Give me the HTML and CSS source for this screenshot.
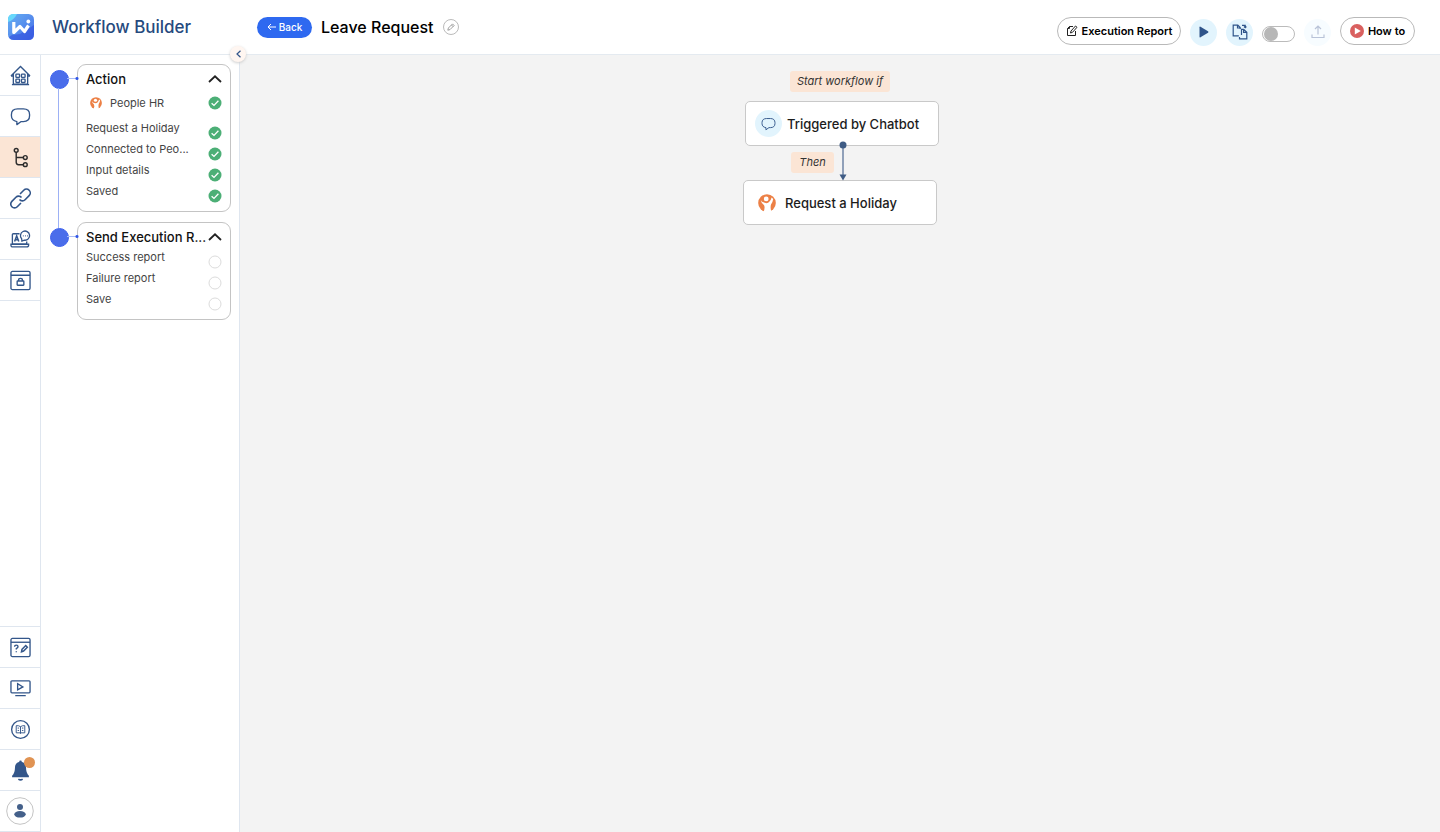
FILE: index.html
```html
<!DOCTYPE html>
<html lang="en">
<head>
<meta charset="utf-8">
<title>Workflow Builder</title>
<link rel="stylesheet" href="styles.css">
</head>
<body>
<svg class="defs" aria-hidden="true">
  <symbol id="check" viewBox="0 0 14 14"><circle cx="7" cy="7" r="6.500" fill="#4caf76"/><path d="M3.600 7.200 6 9.400l4.400-4.600" fill="none" stroke="#fff" stroke-width="1.300"/></symbol>
  <symbol id="ring" viewBox="0 0 14 14"><circle cx="7" cy="7" r="6" fill="#fff" stroke="#dcdcdc"/></symbol>
  <symbol id="up" viewBox="0 0 14 8"><path d="M1 7 7 1.300 13 7" fill="none" stroke="#222" stroke-width="1.800"/></symbol>
  <symbol id="bubble" viewBox="0 0 22 20"><path d="M7.200 15.300C3.600 14.700 1.500 13 1.500 9.300V8C1.500 4 4 2 8 2h6c4 0 6.500 2 6.500 6v1.300c0 4-2.500 6-6.500 6h-2.300L7.200 18.500z" fill="none" stroke="#33568a" stroke-width="1.400" stroke-linejoin="round"/></symbol>
  <symbol id="people" viewBox="0 0 18 18"><circle cx="9" cy="9" r="8.800" fill="#ec8046"/><circle cx="8.200" cy="4.900" r="2.400" fill="#fff"/><path d="M2.800 6.200Q4.500 9 8.500 9.200 12 9 13.600 3.600l1.600 1.300Q14.800 8 13 10.500q-.900 3 .3 7.500H5.500Q7.500 13 5.800 10.800 3.500 9.500 2.800 6.200z" fill="#fff"/></symbol>
</svg>
<div class="app">
  <header class="header">
    <div class="brand">
      <svg class="logo" viewBox="0 0 26 26"><defs><linearGradient id="lg" x1="0" y1="0" x2="1" y2="1"><stop offset="0" stop-color="#62aef4"/><stop offset=".4" stop-color="#5b96ee"/><stop offset="1" stop-color="#4268e8"/></linearGradient></defs><rect width="26" height="26" rx="5.500" fill="url(#lg)"/><path d="M0 8V5.500Q0 0 5.500 0H9Q6 6 0 8z" fill="#67d8fb"/><path d="m4 21 8-1 8-5 6-4v9.500q0 5.500-5.500 5.500h-14Q2 26 1 23z" fill="#3455df" opacity=".65"/><path d="M5.800 8v10.500l6.200-6 4.500 5 4-6" fill="none" stroke="#fff" stroke-width="3.200" stroke-linejoin="round"/><circle cx="20.300" cy="7.500" r="1.900" fill="#fff"/></svg>
      <h1 class="brand-name">Workflow Builder</h1>
    </div>
    <div class="title-bar">
      <button class="back"><svg width="9" height="8" viewBox="0 0 9 8" fill="none" stroke="#fff"><path d="M9 4H1M4 1 1 4l3 3"/></svg>Back</button>
      <h2 class="title">Leave Request</h2>
      <button class="edit" aria-label="Edit name"><svg width="8" height="8" viewBox="0 0 8 8" fill="none" stroke="#888" stroke-width=".8"><path d="m.8 7.200.6-2.200L5.500.9l1.600 1.600L3 6.600zM4.500 2l1.600 1.600"/></svg></button>
    </div>
    <div class="actions">
      <button class="pill"><svg width="12" height="12" viewBox="0 0 12 12" fill="none" stroke="#222"><path d="M7 1.500H3.500L1.500 3.500v7h8V6M3.500 1.500v2h-2M4.500 8l.5-2 4.500-5 1.500 1.300L6.500 7.300z"/></svg>Execution Report</button>
      <button class="round" aria-label="Run"><svg width="10" height="12" viewBox="0 0 10 12"><path d="M.5 1.200Q.5.200 1.500.7L9 5.300q1 .7 0 1.400l-7.500 4.600q-1 .5-1-.5z" fill="#2f548a"/></svg></button>
      <button class="round" aria-label="Duplicate"><svg width="16" height="16" viewBox="0 0 16 16" fill="none" stroke="#2f548a" stroke-width="1.200"><path d="M6.800 11.800H1.200V1.200h4.600L8.200 3.600V5M5.500 1.200V4h2.700M11.800 5.300H9.500V11M11.800 5.300l3 3v6.500H7.500V13M11.600 5.300v3h3.200M10 1.400h3.200v2M12 2.500l1.200 1.200 1.200-1.200"/></svg></button>
      <label class="switch"><input type="checkbox" aria-label="Enable workflow"></label>
      <button class="round faded" aria-label="Publish"><svg width="14" height="14" viewBox="0 0 14 14" fill="none" stroke="#b9c3d8" stroke-width="1.200"><path d="M7 9.500V1M4 4l3-3 3 3M1 9.500v3h12v-3"/></svg></button>
      <button class="pill howto"><svg width="14" height="14" viewBox="0 0 14 14"><circle cx="7" cy="7" r="7" fill="#d9605f"/><path d="M4.800 3.500v7l6-3.500z" fill="#fff"/></svg>How to</button>
    </div>
  </header>
  <div class="body">
    <nav class="rail">
      <a href="#" aria-label="Home"><svg viewBox="0 0 22 22"><path d="m1 11.500 10-10 10 10M3.500 9.500V20h15V9.500"/><path d="M1.200 11.500h2.300M18.500 11.500h2.300M2 20.500h18"/><rect x="6.200" y="9.500" width="3.800" height="3.500" rx=".7"/><rect x="12" y="9.500" width="3.800" height="3.500" rx=".7"/><rect x="6.200" y="14.800" width="3.800" height="3.500" rx=".7"/><rect x="12" y="14.800" width="3.800" height="3.500" rx=".7"/></svg></a>
      <a href="#" aria-label="Chat"><svg viewBox="0 0 22 20"><use href="#bubble"/></svg></a>
      <a href="#" aria-label="Workflows" class="active"><svg viewBox="0 0 22 22"><g stroke="#2c2c2c" stroke-width="1.500"><circle cx="6.500" cy="3.500" r="2"/><path d="M6.500 5.500V16q0 2.500 2.500 2.500h4.800M6.500 11h7.300"/><circle cx="16" cy="11" r="2"/><circle cx="16" cy="18.500" r="2"/></g></svg></a>
      <a href="#" aria-label="Connections"><svg viewBox="0 0 22 22"><g transform="rotate(-45 11 11)" stroke-width="1.700"><path d="M8 14.700H2.500a4 4 0 0 1 0-8h6a4 4 0 0 1 4 4.300"/><path d="M14 7.300h5.500a4 4 0 0 1 0 8h-6a4 4 0 0 1-4-4.300"/></g></svg></a>
      <a href="#" aria-label="Live chat"><svg viewBox="0 0 22 22"><path d="M10 5H3.500q-1 0-1 1v9.500h15V13M1 16h18.500v1q0 1.800-2 1.800H3q-2 0-2-1.800z"/><path d="M4.800 13 7 7.200 9.200 13M5.500 11.300h3" stroke-width="1.600"/><path d="m12.500 12.700-.3-2.500A4.800 4.800 0 1 1 15 11.700zM13.500 7.200h.8m1.400 0h.8m1.400 0h.8"/></svg></a>
      <a href="#" aria-label="Security"><svg viewBox="0 0 22 22"><rect x="1" y="1.500" width="20" height="19" rx="1.500"/><path d="M1 5.500h20M9 11.500v-1q0-1.800 2-1.800t2 1.800v1"/><rect x="7.500" y="11.500" width="7" height="4.500" rx=".5"/></svg></a>
      <div class="rail-gap"></div>
      <a href="#" aria-label="Quiz"><svg viewBox="0 0 22 22"><rect x="1" y="1.500" width="20" height="19" rx="1.500"/><path d="M1 5.500h20"/><path d="M4.800 10.300q0-1.800 1.800-1.800t1.800 1.700q0 1-1.800 2v1M6.600 15v1M12 15.500l.5-2.500 4-4 1.700 1.700-4 4z" stroke-width="1.500"/></svg></a>
      <a href="#" aria-label="Videos"><svg viewBox="0 0 22 22"><rect x="1" y="3" width="20" height="12.500" rx="1"/><path d="M8 6v6.500l5.500-3.200zM5.500 18.500h11"/></svg></a>
      <a href="#" aria-label="Guide"><svg viewBox="0 0 22 22"><circle cx="11" cy="11" r="9.300"/><path d="M11 8v7.500M11 8Q9 6.700 6.500 7v7.500H11h4.500V7Q13 6.700 11 8zM8 9.500h1.500M8 12h1.500M12.500 9.500H14M12.500 12H14" stroke-width="1"/></svg></a>
      <a href="#" aria-label="Notifications"><svg viewBox="0 0 22 22"><path d="M11 .5q1.400 0 1.400 1.500c3.200.8 4.400 3.200 4.400 6q0 5.500 3 8.500V18H2.200v-1.500q3-3 3-8.500c0-2.800 1.200-5.200 4.400-6Q9.600.5 11 .5z" fill="#33568a" stroke="none"/><path d="M8.800 20q2.200 1.600 4.400 0" stroke-width="1.800"/></svg><span class="badge"></span></a>
      <a href="#" aria-label="Account"><svg class="avatar" viewBox="0 0 28 28"><circle cx="14" cy="14" r="13.300" stroke="#c4c4c4"/><circle cx="14" cy="10" r="3" fill="#44608a" stroke="none"/><ellipse cx="14" cy="17.300" rx="5.700" ry="3.300" fill="#44608a" stroke="none"/></svg></a>
    </nav>
    <aside class="panel">
      <button class="collapse" aria-label="Collapse panel"><svg width="5" height="8" viewBox="0 0 5 8" fill="none" stroke="#33568a" stroke-width="1.200"><path d="M4.500.7 1 4l3.500 3.300"/></svg></button>
      <section class="step">
        <div class="marker"></div>
        <div class="card">
          <button class="card-head">Action<svg><use href="#up"/></svg></button>
          <div class="app-row"><svg class="people"><use href="#people"/></svg><span>People HR</span><svg class="mark"><use href="#check"/></svg></div>
          <ul class="rows">
            <li>Request a Holiday<svg class="mark"><use href="#check"/></svg></li>
            <li>Connected to Peo...<svg class="mark"><use href="#check"/></svg></li>
            <li>Input details<svg class="mark"><use href="#check"/></svg></li>
            <li>Saved<svg class="mark"><use href="#check"/></svg></li>
          </ul>
        </div>
      </section>
      <section class="step">
        <div class="marker"></div>
        <div class="card">
          <button class="card-head">Send Execution R...<svg><use href="#up"/></svg></button>
          <ul class="rows">
            <li>Success report<svg class="mark"><use href="#ring"/></svg></li>
            <li>Failure report<svg class="mark"><use href="#ring"/></svg></li>
            <li>Save<svg class="mark"><use href="#ring"/></svg></li>
          </ul>
        </div>
      </section>
    </aside>
    <main class="canvas">
      <div class="diagram">
        <span class="tag tag-start">Start workflow if</span>
        <div class="node node-trigger"><span class="node-icon"><svg width="15" height="14"><use href="#bubble"/></svg></span>Triggered by Chatbot</div>
        <span class="tag tag-then">Then</span>
        <div class="node node-action"><svg class="node-people"><use href="#people"/></svg>Request a Holiday</div>
        <svg class="arrow" viewBox="0 0 8 40"><path d="M4 4v32" stroke="#6f85a6" stroke-width="1.500"/><circle cx="4" cy="4" r="3.500" fill="#3f5c85"/><path d="M.5 33.500h7L4 39.500z" fill="#3f5c85"/></svg>
      </div>
    </main>
  </div>
</div>
</body>
</html>
```
FILE: styles.css
```css
* { box-sizing: border-box; }
body { margin: 0; font-family: Inter, sans-serif; color: #111; background: #fff; }
button { font: inherit; color: inherit; padding: 0; border: 0; background: none; cursor: pointer; }
h1, h2, ul { margin: 0; padding: 0; list-style: none; }
svg { display: block; flex: none; }
.defs { position: absolute; width: 0; height: 0; }
.app { display: flex; flex-direction: column; min-height: 100vh; }

.header { display: flex; align-items: center; height: 55px; border-bottom: 1px solid #e4eaf0; }
.brand { display: flex; align-items: center; gap: 18px; width: 257px; padding-left: 8px; }
.logo { width: 26px; height: 26px; }
.brand-name { font-size: 17px; line-height: 24px; font-weight: 500; color: #264a7e; }
.title-bar { display: flex; align-items: center; gap: 9px; flex: 1; }
.back { display: flex; align-items: center; justify-content: center; gap: 3px; width: 55px; height: 21px; border-radius: 11px; background: #2e69f0; color: #fff; font: 500 10px/14px Inter, sans-serif; }
.title { font-weight: 500; font-size: 16px; line-height: 24px; color: #000; }
.edit { display: grid; place-items: center; width: 16px; height: 16px; border: 1px solid #bbb; border-radius: 50%; }
.actions { display: flex; align-items: center; gap: 9px; padding: 10px 25px 0 0; }
.pill { display: flex; align-items: center; justify-content: center; gap: 4px; width: 124px; height: 28px; margin-bottom: 2px; border: 1px solid #b9b9b9; border-radius: 14px; font: 600 11px/16px Inter, sans-serif; color: #000; }
.howto { width: 75px; }
.round { display: grid; place-items: center; width: 27px; height: 27px; border-radius: 50%; background: #e2f4fd; }
.faded { background: #f7fcff; }
.switch { display: flex; margin-top: 3px; }
.switch input { appearance: none; display: flex; align-items: center; width: 33px; height: 16px; margin: 0; padding: 0 1px; border: 1px solid #bbb; border-radius: 8px; }
.switch input::before { content: ""; width: 14px; height: 14px; border-radius: 50%; background: #b7b7b7; }

.body { display: flex; flex: 1; }
.rail { display: flex; flex-direction: column; width: 41px; border-right: 1px solid #dfe6ef; }
.rail a { position: relative; display: grid; place-items: center; height: 41px; border-bottom: 1px solid #dfe6ef; }
.rail svg { width: 21px; height: 21px; fill: none; stroke: #33568a; stroke-width: 1.4; }
.rail .active { background: #fbe5d5; }
.rail .avatar { width: 28px; height: 28px; stroke-width: 1; }
.rail-gap { flex: 1; border-bottom: 1px solid #dfe6ef; }
.badge { position: absolute; top: 7px; right: 5px; width: 11px; height: 11px; border-radius: 50%; background: #e09353; }

.panel { position: relative; display: flex; flex-direction: column; gap: 10px; width: 199px; padding: 9px 8px 0 9px; border-right: 1px solid #dfe6ef; }
.collapse { position: absolute; top: -9px; right: -7px; display: grid; place-items: center; width: 16px; height: 16px; border-radius: 50%; background: #fff6f1; box-shadow: 0 1px 3px #ccc; }
.step { position: relative; display: grid; grid-template-columns: 27px minmax(0, 1fr); }
.marker::before { content: ""; display: block; width: 17px; height: 17px; margin-top: 6px; border: 1px solid #3e62ee; border-radius: 50%; background: #4a6dea; }
.marker::after { content: ""; position: absolute; left: 17px; top: 13px; width: 12px; height: 3px; background: radial-gradient(circle at 10px 50%, #2f55e8 1px, transparent 2px), linear-gradient(#a9bcf5, #a9bcf5) 0 1px / 9px 1px no-repeat; }
.step:not(:last-child)::after { content: ""; position: absolute; left: 8px; top: 24px; bottom: -16px; width: 1px; background: #9db1f5; }
.card { padding: 4px 8px 9px; border: 1px solid #c4c4c4; border-radius: 9px; }
.card-head { display: flex; align-items: center; justify-content: space-between; width: 100%; height: 20px; white-space: nowrap; font: 500 13px/20px Inter, sans-serif; }
.card-head svg { width: 14px; height: 8px; }
.app-row { display: flex; align-items: center; height: 22px; margin: 3px 0 4px; padding-left: 4px; gap: 8px; font: 400 11px/16px Inter, sans-serif; color: #444; }
.app-row .people { width: 12px; height: 12px; }
.mark { width: 14px; height: 14px; margin-left: auto; }
.rows li { display: flex; align-items: center; height: 21px; font: 400 11px/21px Inter, sans-serif; color: #444; white-space: nowrap; }
.rows .mark { margin-top: 8px; }

.canvas { flex: 1; min-width: 0; background: #f3f3f3; }
.diagram { position: relative; width: 194px; height: 180px; margin: 0 auto; }
.tag { position: absolute; height: 21px; border-radius: 3px; background: #fbe5d5; text-align: center; font: italic 400 11px/20px Inter, sans-serif; color: #333; }
.tag-start { left: 47px; top: 16px; width: 100px; }
.tag-then { left: 48px; top: 97px; width: 43px; }
.node { position: absolute; display: flex; align-items: center; width: 194px; height: 45px; border: 1px solid #c9c9c9; border-radius: 5px; background: #fff; font: 500 13px/20px Inter, sans-serif; color: #1c1c1c; white-space: nowrap; }
.node-trigger { left: 2px; top: 46px; padding-left: 9px; gap: 5px; }
.node-action { left: 0; top: 125px; padding-left: 14px; gap: 9px; }
.node-icon { display: grid; place-items: center; width: 27px; height: 27px; border-radius: 50%; background: #e2f4fd; }
.node-people { width: 18px; height: 18px; }
.arrow { position: absolute; left: 96px; top: 86px; width: 8px; height: 40px; }
```
